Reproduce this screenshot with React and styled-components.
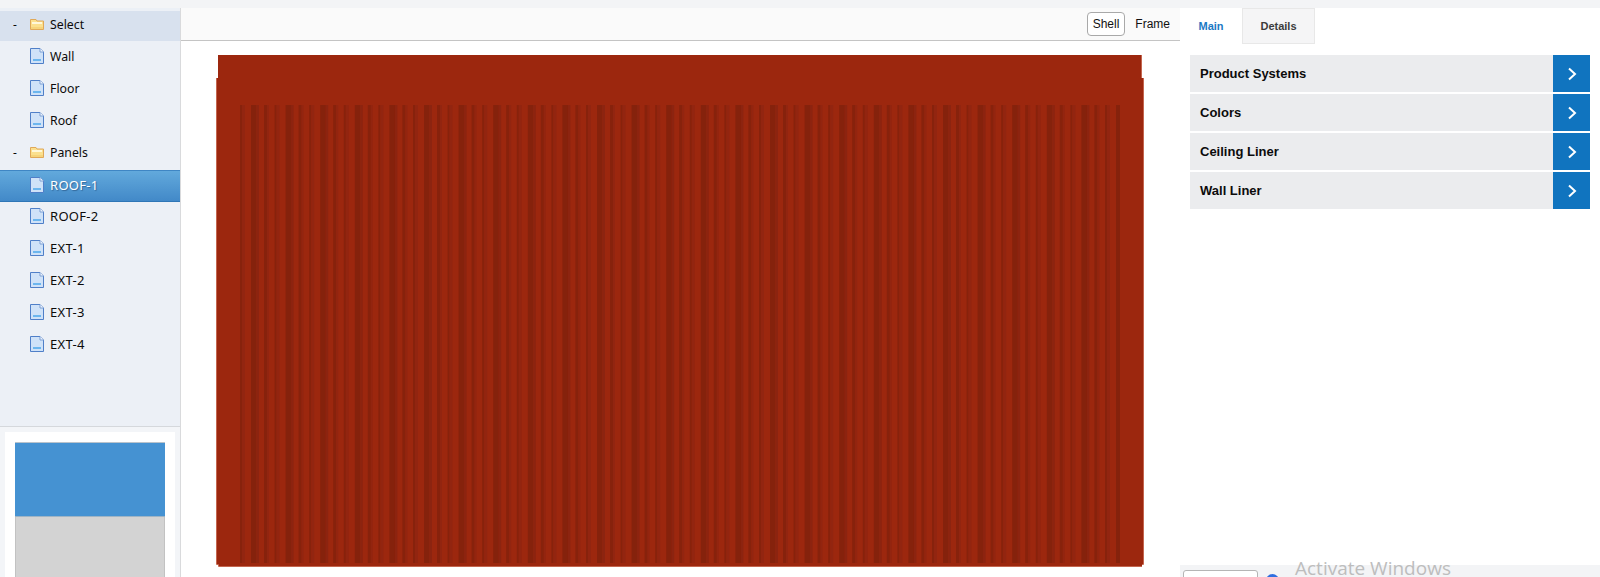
import React from "react";
import styled, { createGlobalStyle } from "styled-components";

const Global = createGlobalStyle`
  html, body { margin: 0; padding: 0; height: 577px; overflow: hidden; background: #fff; }
  #root { height: 577px; }
`;

const Page = styled.div`
  position: relative;
  height: 577px;
  display: flex;
  flex-direction: column;
  overflow: hidden;
  font-family: "Liberation Sans", Arial, sans-serif;
`;
const TopStrip = styled.div`
  height: 8px;
  flex: none;
  background: #f3f4f6;
`;
const Body = styled.div`
  flex: 1;
  min-height: 0;
  display: grid;
  grid-template-columns: 181px 999px 420px;
`;
const Sidebar = styled.aside`
  display: flex;
  flex-direction: column;
  background: #ecf0f6;
  border-right: 1px solid #d9dadc;
  min-height: 0;
  overflow: hidden;
`;
const Tree = styled.ul`
  flex: 1;
  list-style: none;
  margin: 0;
  padding: 3px 0 0;
  border-bottom: 1px solid #d5d8dc;
`;
const TreeRow = styled.li`
  box-sizing: border-box;
  height: ${(p) => (p.$variant === "header" ? "30px" : "32px")};
  margin-bottom: ${(p) => (p.$variant === "header" ? "1px" : "0")};
  padding-bottom: ${(p) => (p.$variant === "selected" ? "3px" : "4px")};
  display: flex;
  align-items: center;
  font: ${(p) => (p.$caps ? "13px" : "12.3px")} "Noto Sans", sans-serif;
  letter-spacing: ${(p) => (p.$caps ? "0.3px" : "0")};
  color: #0b0b0b;
  ${(p) =>
    p.$variant === "selected" &&
    `background: linear-gradient(#62a9dc, #4289c8);
     border-top: 1px solid #3f86c4;
     border-bottom: 1px solid #2f76b6;
     color: #fff;
     text-shadow: 1px 1px 1px #33689a;`}
  ${(p) => p.$variant === "header" && `background: #d8e1ee;`}
`;
const Toggle = styled.span`
  width: 30px;
  flex: none;
  padding-left: 13px;
  box-sizing: border-box;
  font-size: 12px;
`;
const RowIcon = styled.span`
  width: 20px;
  flex: none;
  display: flex;
`;
const Thumb = styled.div`
  flex: none;
  height: 150px;
  box-sizing: border-box;
  padding: 5px 5px 0;
  background: #f3f5f8;
`;
const ThumbInner = styled.div`
  height: 100%;
  box-sizing: border-box;
  padding: 10px 10px 0;
  background: #fff;
  display: flex;
  flex-direction: column;
`;
const ThumbBlue = styled.div`
  height: 73px;
  flex: none;
  background: #4592d2;
  border-top: 1px solid #b9c3cc;
  border-bottom: 1px solid #9eb4c5;
`;
const ThumbGray = styled.div`
  flex: 1;
  background: #d3d3d3;
  border: 1px solid #c2c2c2;
  border-width: 0 1px;
`;
const Center = styled.main`
  display: flex;
  flex-direction: column;
  min-width: 0;
`;
const Toolbar = styled.div`
  height: 33px;
  flex: none;
  box-sizing: border-box;
  background: #fafafa;
  border-bottom: 1px solid #c4c4c4;
  display: flex;
  align-items: flex-start;
  justify-content: flex-end;
  gap: 9px;
  padding: 4px 9px 0 0;
`;
const ViewButton = styled.button`
  height: 24px;
  box-sizing: border-box;
  padding: 0 ${(p) => (p.$active ? "5px" : "0")};
  margin: 0;
  background: ${(p) => (p.$active ? "#fff" : "transparent")};
  border: ${(p) => (p.$active ? "1px solid #a9a9a9" : "1px solid transparent")};
  border-radius: 4px;
  font: 12px "Liberation Sans", sans-serif;
  color: #111;
`;
const Canvas = styled.div`
  flex: 1;
  min-height: 0;
  padding: 14px 0 0 35px;
  background: #fff;
`;
const Right = styled.section`
  display: flex;
  flex-direction: column;
  background: #fff;
  min-height: 0;
`;
const Tabs = styled.div`
  display: flex;
  height: 36px;
  flex: none;
`;
const Tab = styled.div`
  box-sizing: border-box;
  width: ${(p) => (p.$active ? "62px" : "73px")};
  display: flex;
  align-items: center;
  justify-content: center;
  font: bold 11px "Liberation Sans", sans-serif;
  color: ${(p) => (p.$active ? "#1b7ac4" : "#3c3c3c")};
  background: ${(p) => (p.$active ? "#fff" : "#f5f5f6")};
  border: ${(p) => (p.$active ? "none" : "1px solid #e8e8e8")};
`;
const Accordion = styled.div`
  flex: 1;
  display: flex;
  flex-direction: column;
  gap: 2px;
  padding: 11px 10px 0;
`;
const AccRow = styled.div`
  height: 37px;
  display: flex;
  align-items: center;
  justify-content: space-between;
  background: #ebecee;
  font: bold 13px "Liberation Sans", sans-serif;
  color: #0b0b0b;
  padding-left: 10px;
`;
const AccArrow = styled.div`
  width: 37px;
  height: 37px;
  background: #1074bf;
  display: flex;
  align-items: center;
  justify-content: center;
`;
const Footer = styled.div`
  flex: none;
  height: 12px;
  background: #f3f4f6;
  padding: 5px 0 0 3px;
  box-sizing: border-box;
  display: flex;
  gap: 8px;
  overflow: hidden;
`;
const FooterButton = styled.button`
  width: 75px;
  height: 24px;
  flex: none;
  padding: 0;
  background: #fff;
  border: 1px solid #b5b5b5;
  border-radius: 3px;
  font: 12px "Liberation Sans", sans-serif;
  color: #111;
`;
const Radio = styled.span`
  width: 13px;
  height: 13px;
  margin-top: 4px;
  flex: none;
  border-radius: 50%;
  border: 3px solid #2f6fe0;
  box-sizing: border-box;
`;
const Watermark = styled.div`
  position: absolute;
  left: 1295px;
  top: 555px;
  font: 19px "Open Sans", sans-serif;
  color: #bdbdbd;
  white-space: nowrap;
  pointer-events: none;
`;

const Doc = () => (
  <svg width="14" height="16" viewBox="0 0 14 16">
    <path d="M.5.5H10L13.5 4V15.5H.5Z" fill="#cfe2f8" stroke="#4f7fc8" />
    <path d="M10 .5V4H13.5" fill="#f4f8fd" stroke="#7b9ed4" />
    <rect x="3" y="11" width="8" height="2" fill="#6cb6ee" />
  </svg>
);
const Folder = () => (
  <svg width="14" height="11" viewBox="0 0 14 11">
    <path d="M.5 10.5V.5H6L7 2H13.5V10.5Z" fill="#fbe08e" stroke="#e0a858" />
    <path d="M2 3H12V5H2Z" fill="#fff8da" />
    <path d="M1 8H13V10H1Z" fill="#f6d47a" />
  </svg>
);

const Drawing = () => {
  const stripes = [];
  const period = 34.6;
  const parts = [
    [0, 2, "#87220c"],
    [2, 3, "#922510"],
    [11, 5.5, "#85220c"],
    [16.5, 2.5, "#8c2410"],
    [24, 3, "#87220c"],
    [27, 2, "#922510"],
  ];
  for (let i = 0; i < 26; i++) {
    parts.forEach(([x, w, c], j) => {
      const left = 24 + i * period + x;
      const width = Math.min(w, 904 - left);
      if (width > 0) {
        stripes.push(
          <rect key={`${i}-${j}`} x={left} y="50" width={width} height="458" fill={c} />
        );
      }
    });
  }
  return (
    <svg width="930" height="514" viewBox="0 0 930 514">
      <path d="M2 0H926V23H928V509H926V511H2V509H0V23H2Z" fill="#9c270e" />
      <path d="M.5 23V509.5H2.5V511.5H926" fill="none" stroke="#c4664f" strokeWidth="1" />
      <path d="M927.5 23V509.5H926" fill="none" stroke="#c4664f" strokeWidth="1" />
      <path d="M925.5 0V23" stroke="#c4664f" strokeWidth="1" />
      {stripes}
    </svg>
  );
};

const leaf = ["Wall", "Floor", "Roof"];
const panels = ["ROOF-1", "ROOF-2", "EXT-1", "EXT-2", "EXT-3", "EXT-4"];
const accordion = ["Product Systems", "Colors", "Ceiling Liner", "Wall Liner"];

export default function App() {
  return (
    <Page>
      <Global />
      <TopStrip />
      <Body>
        <Sidebar>
          <Tree>
            <TreeRow $variant="header">
              <Toggle>-</Toggle>
              <RowIcon><Folder /></RowIcon>
              Select
            </TreeRow>
            {leaf.map((t) => (
              <TreeRow key={t}>
                <Toggle />
                <RowIcon><Doc /></RowIcon>
                {t}
              </TreeRow>
            ))}
            <TreeRow>
              <Toggle>-</Toggle>
              <RowIcon><Folder /></RowIcon>
              Panels
            </TreeRow>
            {panels.map((t, i) => (
              <TreeRow key={t} $caps $variant={i === 0 ? "selected" : undefined}>
                <Toggle />
                <RowIcon><Doc /></RowIcon>
                {t}
              </TreeRow>
            ))}
          </Tree>
          <Thumb>
            <ThumbInner>
              <ThumbBlue />
              <ThumbGray />
            </ThumbInner>
          </Thumb>
        </Sidebar>
        <Center>
          <Toolbar>
            <ViewButton $active>Shell</ViewButton>
            <ViewButton>Frame</ViewButton>
          </Toolbar>
          <Canvas>
            <Drawing />
          </Canvas>
        </Center>
        <Right>
          <Tabs>
            <Tab $active>Main</Tab>
            <Tab>Details</Tab>
          </Tabs>
          <Accordion>
            {accordion.map((t) => (
              <AccRow key={t}>
                {t}
                <AccArrow>
                  <svg width="10" height="14" viewBox="0 0 10 14">
                    <path d="M2 1.5L8 7L2 12.5" fill="none" stroke="#fff" strokeWidth="2" />
                  </svg>
                </AccArrow>
              </AccRow>
            ))}
          </Accordion>
          <Footer>
            <FooterButton>Save</FooterButton>
            <Radio />
          </Footer>
        </Right>
      </Body>
      <Watermark>Activate Windows</Watermark>
    </Page>
  );
}
